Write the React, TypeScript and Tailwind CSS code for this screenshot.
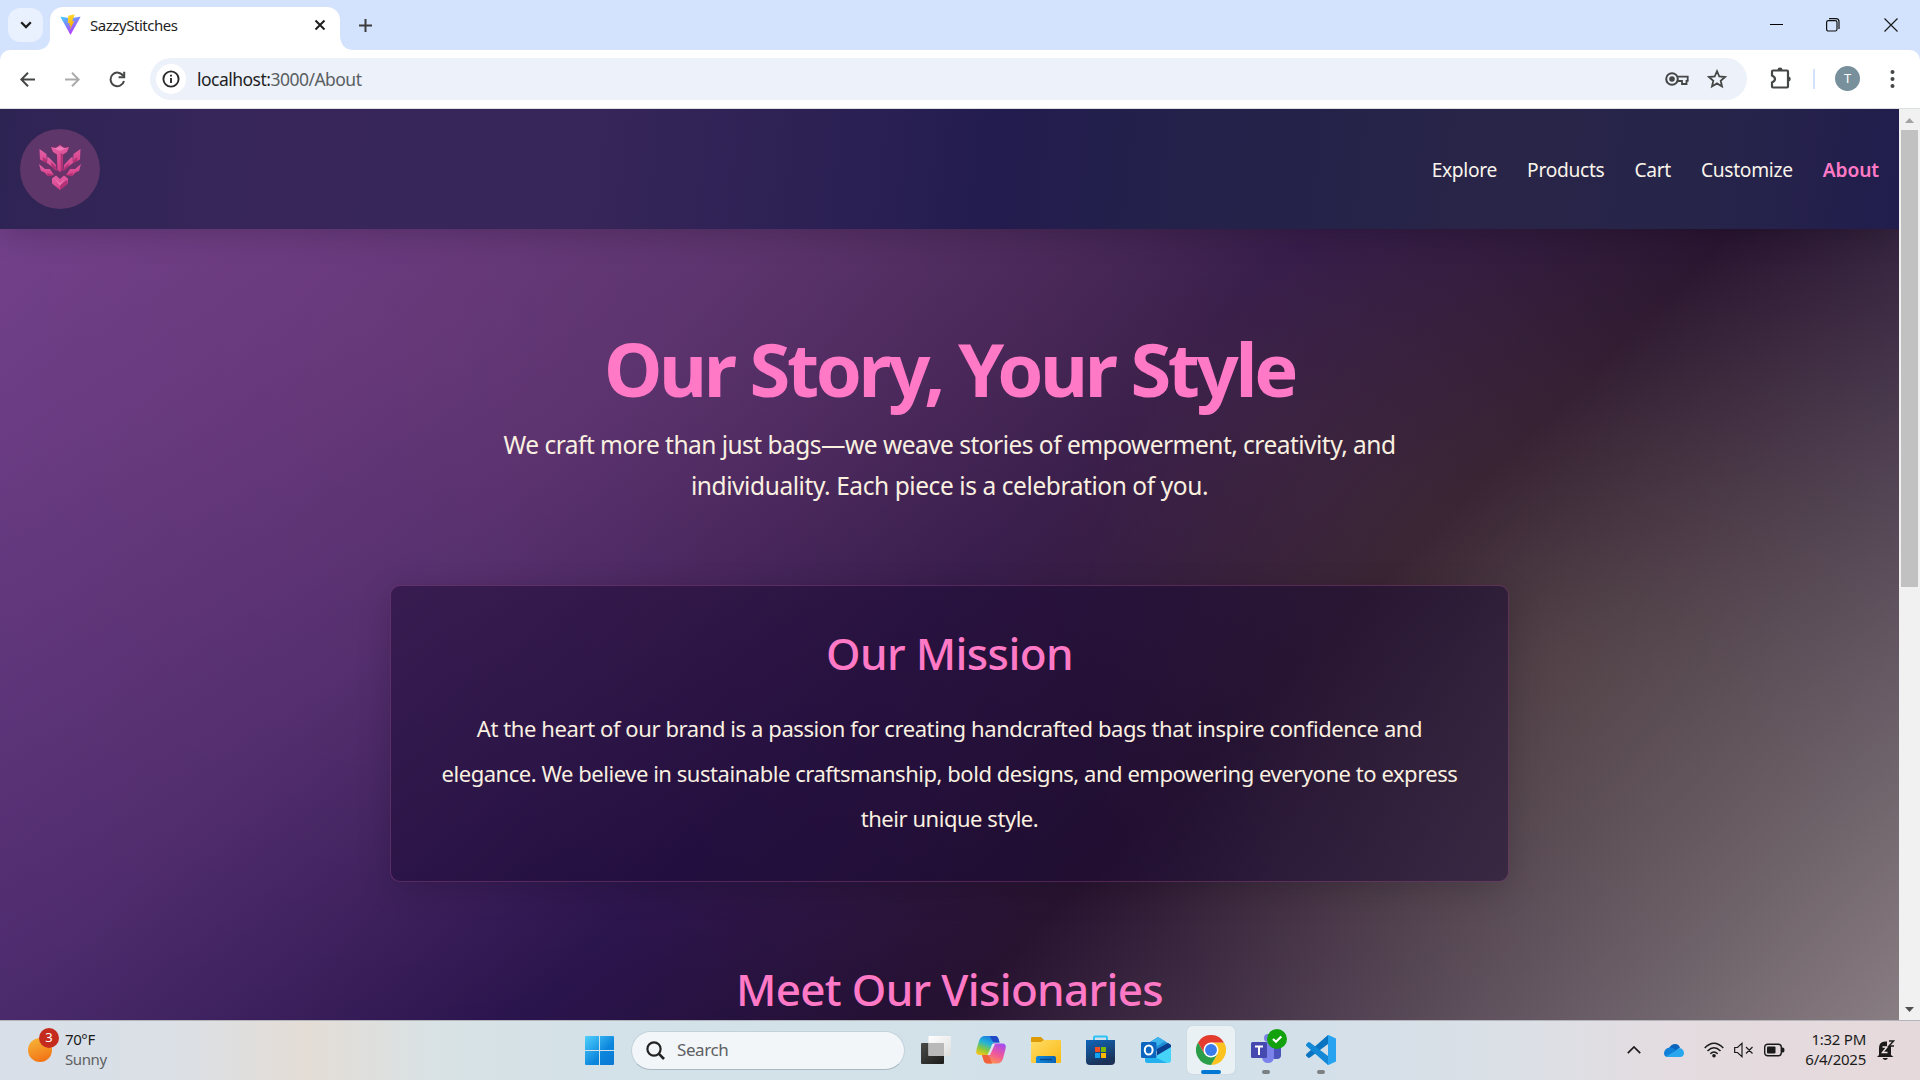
import React from "react";

const navLinks = ["Explore", "Products", "Cart", "Customize"];

function ViteLogo() {
  return (
    <svg width="21" height="21" viewBox="0 0 32 32" className="shrink-0">
      <defs>
        <linearGradient id="viteA" x1="0" y1="0" x2="0.6" y2="1">
          <stop offset="0" stopColor="#41d1ff" />
          <stop offset="1" stopColor="#bd34fe" />
        </linearGradient>
        <linearGradient id="viteB" x1="0" y1="0" x2="0.2" y2="1">
          <stop offset="0" stopColor="#ffdd35" />
          <stop offset="1" stopColor="#ffa800" />
        </linearGradient>
      </defs>
      <path d="M31 5 16.6 31 Q16 31.8 15.4 31 L1 5 Q.6 3.9 1.8 4 L16 6.500 30.2 4 Q31.400 3.9 31 5Z" fill="url(#viteA)" />
      <path d="M22.500 0.500 12.500 2.500 11.800 14 14.800 13.300 14 17.600 16.300 17 14.800 24.500 22 10.800 18.500 11.500Z" fill="url(#viteB)" />
    </svg>
  );
}

function TabStrip() {
  return (
    <div className="flex h-[50px] items-start bg-[#d3e2fd]">
      <button className="ml-2 mt-2 flex h-[34px] w-[35px] items-center justify-center rounded-[12px] bg-[#e9f0fe]">
        <svg width="12" height="8" viewBox="0 0 12 8" fill="none" stroke="#1f1f1f" strokeWidth="2.300">
          <path d="M1.200 1.200 6 6 10.800 1.200" />
        </svg>
      </button>
      <div className="mt-[7px] flex h-[43px]">
        <svg width="7" height="43" viewBox="0 0 7 43" className="overflow-visible">
          <path d="M7.500 27 V43 H-7 Q7.500 43 7.500 27Z" fill="#fff" />
        </svg>
        <div className="flex h-[43px] w-[290px] items-start rounded-t-[13px] bg-white pl-[10px] pr-[14px] pt-[7px]">
          <ViteLogo />
          <span className="ml-[9px] text-[15px] leading-[22px] tracking-[-0.45px] text-[#1f1f1f]">SazzyStitches</span>
          <svg width="12" height="12" viewBox="0 0 12 12" className="ml-auto mt-[5px]" stroke="#1f1f1f" strokeWidth="2">
            <path d="M1.500 1.500 10.500 10.500 M10.500 1.500 1.500 10.500" />
          </svg>
        </div>
        <svg width="14" height="43" viewBox="0 0 14 43">
          <path d="M0 27 V43 H14 Q0 43 0 27Z" fill="#fff" />
        </svg>
      </div>
      <svg width="13" height="13" viewBox="0 0 13 13" className="ml-[5px] mt-[19px]" stroke="#3c3c3c" strokeWidth="2">
        <path d="M6.500 0 V13 M0 6.500 H13" />
      </svg>
      <div className="ml-auto mr-[22px] mt-[18px] flex items-start">
        <svg width="13" height="14" viewBox="0 0 13 14" fill="none" stroke="#000">
          <path d="M0 6.500 H13" />
        </svg>
        <svg width="14" height="14" viewBox="0 0 14 14" fill="none" stroke="#111" strokeWidth="1.200" className="ml-[43px]">
          <rect x="0.600" y="2.600" width="10.400" height="10.400" rx="1.800" />
          <path d="M3 .7 H10 Q13 .7 13 3.700 V11" />
        </svg>
        <svg width="14" height="14" viewBox="0 0 14 14" fill="none" stroke="#1a1a1a" strokeWidth="1.200" className="ml-11">
          <path d="M.5 .5 13.500 13.500 M13.500 .5 .5 13.500" />
        </svg>
      </div>
    </div>
  );
}

function Toolbar() {
  return (
    <div className="h-[59px] bg-[#d3e2fd]">
      <div className="flex h-[59px] items-start rounded-t-[10px] border-b border-[#dadfe0] bg-white pt-2">
        <div className="flex h-[42px] w-[150px] items-center pl-5">
          <svg width="15" height="15" viewBox="0 0 15 15" fill="none" stroke="#454746" strokeWidth="2">
            <path d="M15 7.500 H1.500 M8 .8 1.300 7.500 8 14.200" />
          </svg>
          <svg width="15" height="15" viewBox="0 0 15 15" fill="none" stroke="#ababab" strokeWidth="2" className="ml-[30px]">
            <path d="M0 7.500 H13.500 M7 .8 13.700 7.500 7 14.200" />
          </svg>
          <svg width="17" height="17" viewBox="0 0 17 17" fill="none" stroke="#454746" strokeWidth="2" className="ml-[29px]">
            <path d="M14.300 5 A6.800 6.800 0 1 0 15 10" />
            <path d="M15.200 .8 V6.300 H9.600" />
          </svg>
        </div>
        <div className="flex h-[42px] w-[1597px] items-center rounded-full bg-[#ecf1fa] pl-[6px] pr-[20px]">
          <span className="flex h-[30px] w-[30px] items-center justify-center rounded-full bg-white">
            <svg width="18" height="18" viewBox="0 0 18 18" fill="none" stroke="#2a2b2b" strokeWidth="1.900">
              <circle cx="9" cy="9" r="7.600" />
              <path d="M9 8 V13 M9 4.800 V6.600" />
            </svg>
          </span>
          <span className="ml-[11px] text-[17.5px] leading-6 tracking-[-0.52px] text-[#5a5e62]">
            <span className="text-[#1f1f1f]">localhost:</span>3000/About
          </span>
          <svg width="24" height="14" viewBox="0 0 24 14" fill="none" stroke="#454746" strokeWidth="2" className="ml-auto">
            <circle cx="7" cy="7" r="5.800" />
            <circle cx="7" cy="7" r="1.800" fill="#454746" />
            <path d="M12.500 4.700 H22.700 V8.800 H21.500 V12 H17 V9 H12.500" strokeWidth="1.800" />
          </svg>
          <svg width="20" height="20" viewBox="0 0 20 20" fill="none" stroke="#454746" strokeWidth="1.800" className="ml-[18px]">
            <path d="M10 2.200 12.300 7.500 18 8 13.700 11.800 15 17.400 10 14.400 5 17.400 6.300 11.800 2 8 7.700 7.500Z" />
          </svg>
        </div>
        <svg width="22" height="22" viewBox="0 0 22 22" fill="none" stroke="#454746" strokeWidth="2.200" className="ml-[23px] mt-[9px]">
          <path d="M2 4.500 Q2 3.500 3 3.500 H17 Q18 3.500 18 4.500 V19.500 Q18 20.500 17 20.500 H3 Q2 20.500 2 19.500 V15.500 Q5 14 5 12 Q5 10 2 8.500Z" />
          <path d="M7.500 3 Q7.500 .6 10 .6 Q12.500 .6 12.500 3Z M18.500 9.500 Q20.800 9.700 20.800 12 Q20.800 14.300 18.500 14.500Z" fill="#454746" stroke="none" />
        </svg>
        <div className="ml-[21px] mt-[11px] h-5 w-[2px] bg-[#d3e2fd]" />
        <span className="ml-5 mt-2 flex h-[25px] w-[25px] items-center justify-center rounded-full bg-[#78909c] text-[13px] text-white">T</span>
        <svg width="5" height="18" viewBox="0 0 5 18" fill="#454746" className="ml-[30px] mt-3">
          <circle cx="2.500" cy="2" r="2" />
          <circle cx="2.500" cy="9" r="2" />
          <circle cx="2.500" cy="16" r="2" />
        </svg>
      </div>
    </div>
  );
}

function BrandMark() {
  return (
    <svg width="44" height="46" viewBox="0 0 44 46">
      <defs>
        <linearGradient id="brand" x1="0" y1="0" x2="0.3" y2="1">
          <stop offset="0" stopColor="#e563a8" />
          <stop offset="1" stopColor="#d8428c" />
        </linearGradient>
      </defs>
      <g fill="#8e2c66" opacity=".7">
        <path d="M22 0 32 3 29 9 26 12 26 27 36 12 42 6 42.500 18 37 24 43 21 41 28 34 33 29 33 30 40 22 46 14 40 15 33 10 33 3 28 1 21 7 24 1 18 1 5 9 12 18 24 18 12 12 3Z" opacity=".35" />
      </g>
      <g fill="url(#brand)">
        <path d="M22 1 26 4 31 3 29 8 25 10.500 24.500 26 22 28 19.500 26 19 10.500 15 8 13 3 18 4Z" />
        <path d="M1.500 5 8.500 10 9 19 2 15.500Z M42.500 5 35.500 10 35 19 42 15.500Z" />
        <path d="M9.500 12.500 13 15.500 18 21 18.500 27 13.500 22.500 9 19Z M34.500 12.500 31 15.500 26 21 25.500 27 30.500 22.500 35 19Z" />
        <path d="M1 20 7 25 12 25 16 31 10 32 6 28 3 27Z M43 20 37 25 32 25 28 31 34 32 38 28 41 27Z" />
        <path d="M22 46 14 39.500 14 34.500 18 31.500 22 35 26 31.500 30 34.500 30 39.500Z" />
      </g>
      <g fill="#a72d70" opacity=".8">
        <path d="M22.600 9 25 10.500 24.500 26 22.800 28Z M5 13 9 16 9 19 5 17.500Z M39 13 35 17 35 19 39 17Z" />
        <path d="M13 18 18 23 18.500 27 13.500 22.500Z M31 19 26 24 25.500 27 30.500 22.500Z M9 29 16 31 10 32Z M35 29 28 31 34 32Z M22 41 29 36 30 39.500 22 46Z" />
      </g>
      <path d="M22 2.500 28 4.500 22 7 16 4.500Z M17 35 22 39 27 35 22 42Z" fill="#f98cc4" opacity=".6" />
    </svg>
  );
}

function SiteNav() {
  return (
    <nav className="relative flex h-[120px] shrink-0 items-center justify-between bg-[linear-gradient(97deg,#2e2454_0%,#38265a_14%,#37265a_30%,#2b2053_45%,#231c4f_52%,#23204b_60%,#282548_78%,#27244a_90%,#211d4d_100%)] px-5 shadow-[0_4px_30px_rgba(0,0,0,0.2)]">
      <div className="flex h-20 w-20 items-center justify-center rounded-full bg-[#5e366a] pb-1">
        <BrandMark />
      </div>
      <div className="flex gap-[30px] pt-[2px] text-[19.2px] leading-7 tracking-[-0.3px] text-[#faf4ea]">
        {navLinks.map((label) => (
          <a key={label}>{label}</a>
        ))}
        <a className="font-semibold tracking-[-0.1px] text-[#ff79c6]">About</a>
      </div>
    </nav>
  );
}

function AboutPage() {
  return (
    <main className="flex h-[911px] w-[1899px] flex-col overflow-hidden bg-[radial-gradient(circle_at_20%_25%,rgba(255,121,150,0.10),transparent_850px),radial-gradient(circle_at_62%_28%,rgba(255,160,70,0.10),transparent_800px),radial-gradient(circle_at_82%_60%,rgba(170,190,90,0.13),transparent_480px),linear-gradient(135deg,#6f408d_0%,#4a2a6c_32%,#26124b_51%,#220f30_66%,#897e82_100%)] text-center">
      <SiteNav />
      <h1 className="mt-[95px] text-[74px] font-bold leading-[90px] tracking-[-3.35px] text-[#ff79c6]">Our Story, Your Style</h1>
      <p className="mt-[10px] text-[24.5px] leading-[41px] text-[#faf0e0]">
        <span className="block tracking-[-0.52px]">We craft more than just bags—we weave stories of empowerment, creativity, and</span>
        <span className="block tracking-[-0.42px]">individuality. Each piece is a celebration of you.</span>
      </p>
      <section className="mx-auto mt-[79px] w-[1119px] shrink-0 rounded-[10px] border border-[rgba(255,121,198,0.22)] bg-[rgba(24,7,50,0.5)] py-10 shadow-[0_8px_32px_rgba(0,0,0,0.17)]">
        <h2 className="text-[44px] font-medium leading-[54px] tracking-[-0.6px] text-[#ff79c6]">Our Mission</h2>
        <p className="mt-[26px] text-[22px] leading-[45px] tracking-[-0.46px] text-[#faf0e0]">
          <span className="block tracking-[-0.41px]">At the heart of our brand is a passion for creating handcrafted bags that inspire confidence and</span>
          <span className="block">elegance. We believe in sustainable craftsmanship, bold designs, and empowering everyone to express</span>
          <span className="block">their unique style.</span>
        </p>
      </section>
      <h2 className="mt-20 shrink-0 text-[44px] font-medium leading-[54px] tracking-[-0.66px] text-[#ff79c6]">Meet Our Visionaries</h2>
    </main>
  );
}

function Scrollbar() {
  return (
    <div className="flex w-[21px] flex-col items-center bg-[#f1f1f1]">
      <svg width="9" height="5" viewBox="0 0 9 5" className="mb-[7px] mt-[9px]">
        <path d="M4.500 0 9 5 H0Z" fill="#a3a3a3" />
      </svg>
      <div className="h-[457px] w-[17px] bg-[#c1c1c1]" />
      <svg width="9" height="5" viewBox="0 0 9 5" className="mb-[8px] mt-auto">
        <path d="M4.500 5 9 0 H0Z" fill="#505050" />
      </svg>
    </div>
  );
}

function PinnedApps() {
  return (
    <div className="flex items-center">
      <svg width="30" height="30" viewBox="0 0 30 30">
        <defs>
          <linearGradient id="tv1" x1="0" y1="0" x2="1" y2="1"><stop offset="0" stopColor="#4a4a48" /><stop offset="1" stopColor="#1c1c1b" /></linearGradient>
          <linearGradient id="tv2" x1="0" y1="0" x2="1" y2="1"><stop offset="0" stopColor="#fff" /><stop offset="1" stopColor="#dedede" /></linearGradient>
        </defs>
        <rect x="0" y="8" width="23" height="21" rx="1" fill="url(#tv1)" />
        <rect x="7.500" y="1" width="22.500" height="20" rx="1" fill="url(#tv2)" />
        <rect x="7.500" y="8" width="15.500" height="13" fill="#b9b9b9" />
      </svg>
      <svg width="32" height="30" viewBox="0 0 32 30" className="ml-6">
        <defs>
          <linearGradient id="cp1" x1="0.700" y1="0" x2="0.200" y2="1"><stop offset="0" stopColor="#1b6fe0" /><stop offset=".4" stopColor="#24b4d8" /><stop offset=".72" stopColor="#8cc83c" /><stop offset="1" stopColor="#f6c51c" /></linearGradient>
          <linearGradient id="cp2" x1="0.800" y1="0" x2="0.300" y2="1"><stop offset="0" stopColor="#a44df0" /><stop offset=".5" stopColor="#f0579a" /><stop offset="1" stopColor="#ff9a4a" /></linearGradient>
        </defs>
        <path d="M15 1 H20 Q22.500 1 23.500 4 L24.500 7.500 H20 Q17.500 7.500 16.500 11 L14 20 H5 Q0 20 1.500 14.500 L4 6 Q5.500 1 10 1Z" fill="url(#cp1)" />
        <path d="M15 1 H20 Q22.500 1 23.500 4 L24.500 7.500 H20 Q17 7 15 1Z" fill="#2149c6" />
        <path d="M17 28.500 H12.500 Q9.500 28.500 8.500 25 L7 20 H12 Q14.500 20 15.500 17 L18 8.500 H27 Q32 8.500 30.500 14 L28 23.500 Q26.500 28.500 22 28.500Z" fill="url(#cp2)" />
        <path d="M17 28.500 H12.500 Q9.500 28.500 8.500 25 L7 20 H12 Q15 21 17 28.500Z" fill="#f0603c" />
        <path d="M17.500 9 H20 L15 20 H12.500Z" fill="#dce6ee" />
      </svg>
      <svg width="30" height="28" viewBox="0 0 30 28" className="ml-6">
        <defs>
          <linearGradient id="fd" x1="0" y1="0" x2="1" y2="1"><stop offset="0" stopColor="#ffdd67" /><stop offset="1" stopColor="#fbb914" /></linearGradient>
          <linearGradient id="fd2" x1="0" y1="0" x2="1" y2="0"><stop offset="0" stopColor="#0f8ade" /><stop offset="1" stopColor="#0b62b4" /></linearGradient>
        </defs>
        <path d="M0 2 Q0 1 1 1 H10 L13 4 H28 V10 H0Z" fill="#dd9c07" />
        <path d="M0 6 H10 L13 4 H29 Q30 4 30 5 V26 Q30 27 29 27 H1 Q0 27 0 26Z" fill="url(#fd)" />
        <path d="M5 27 V22 Q5 20 7 20 H23 Q25 20 25 22 V27Z" fill="url(#fd2)" />
        <path d="M9 23.500 H21" stroke="#07468b" strokeWidth="1.400" />
      </svg>
      <svg width="29" height="30" viewBox="0 0 29 30" className="ml-[25px]">
        <defs><linearGradient id="st" x1="0" y1="0" x2="0.400" y2="1"><stop offset="0" stopColor="#0f66b8" /><stop offset="1" stopColor="#1b3157" /></linearGradient></defs>
        <path d="M8 6 V2.500 Q8 1.500 9 1.500 H20 Q21 1.500 21 2.500 V6" fill="none" stroke="#2fc2f5" strokeWidth="2" />
        <path d="M0 5 H29 V26 Q29 30 25 30 H4 Q0 30 0 26Z" fill="url(#st)" />
        <path d="M9 12 H14 V17 H9Z" fill="#f25022" /><path d="M15 12 H20 V17 H15Z" fill="#7fba00" />
        <path d="M9 18 H14 V23 H9Z" fill="#12a4f0" /><path d="M15 18 H20 V23 H15Z" fill="#ffb900" />
      </svg>
      <svg width="30" height="28" viewBox="0 0 30 28" className="ml-[26px]">
        <path d="M4 9 17 1 30 9 V15 H4Z" fill="#1f8fd8" />
        <path d="M17 1 24 5 10 14 4 10Z" fill="#3cb5ee" />
        <path d="M27 7 30 9 V12 L16 20 V13Z" fill="#0b3f8f" />
        <path d="M30 11 V24 Q30 27 27 27 H7 Q4 27 4 24 V21 L15 14.500 V20Z" fill="#45d3f8" />
        <path d="M4 22 H16 L26 27 H7 Q4 27 4 24Z" fill="#22b1ee" />
        <rect x="0" y="6" width="15.500" height="16" rx="1.500" fill="#0c66c0" />
        <ellipse cx="7.700" cy="14" rx="3.900" ry="4.600" fill="none" stroke="#fff" strokeWidth="2" />
      </svg>
      <div className="ml-4 flex h-12 w-12 flex-col items-center rounded-[5px] bg-[#eaf1f5] pt-[9px] shadow-[0_0_1px_#9fb0bb]">
        <svg width="30" height="30" viewBox="0 0 48 48">
          <path d="M24 12 H44.800 A24 24 0 0 1 24 48 L34.400 30Z" fill="#fcc31e" />
          <path d="M13.600 30 3.200 12 A24 24 0 0 0 24 48 L34.400 30Z" fill="#2a9e48" />
          <path d="M3.200 12 A24 24 0 0 1 44.800 12 H24 L13.600 30Z" fill="#e33b2e" />
          <circle cx="24" cy="24" r="12" fill="#fff" />
          <circle cx="24" cy="24" r="9.500" fill="#3a7cec" />
        </svg>
        <div className="mt-[5px] h-1 w-5 shrink-0 rounded-full bg-[#0078d4]" />
      </div>
      <div className="ml-4 flex h-12 w-[36px] flex-col pt-[3px]">
        <svg width="36" height="36" viewBox="0 0 36 36" className="shrink-0">
          <rect x="20" y="13" width="10" height="17" rx="4" fill="#4b53bc" />
          <circle cx="17" cy="9" r="4" fill="#7b83eb" />
          <path d="M11 13 H23 V27 Q23 34 17 34 Q12 34 11 29Z" fill="#7b83eb" />
          <rect x="0" y="13" width="16" height="16" rx="1.500" fill="#4549b0" />
          <path d="M4 17.500 H12 M8 17.500 V26" stroke="#fff" strokeWidth="2" fill="none" />
          <circle cx="26" cy="10" r="10" fill="#13a10e" />
          <path d="M22 10 25 12.800 30.300 7.500" fill="none" stroke="#fff" strokeWidth="2.200" />
        </svg>
        <div className="ml-[11px] mt-[5px] h-1 w-2 shrink-0 rounded-full bg-[#7b8083]" />
      </div>
      <div className="ml-[19px] flex h-12 w-[30px] flex-col items-center pt-[9px]">
        <svg width="30" height="30" viewBox="0 0 30 30">
          <path d="M0 20.500 Q-.3 19.500 .6 18.700 L22 0 V9 L4 22.500 Q2.800 23.300 1.800 22.400Z" fill="#0a74c0" />
          <path d="M0 9.500 Q-.3 10.500 .6 11.300 L22 30 V21 L4 7.500 Q2.800 6.700 1.800 7.600Z" fill="#1288d6" />
          <path d="M21.500 .2 22.500 0 30 3.500 V26.500 L22.500 30 21 29.500 Q22 29.500 22 28 V2 Q22 .8 21.500 .2Z" fill="#27a3f0" />
        </svg>
        <div className="mt-[5px] h-1 w-2 shrink-0 rounded-full bg-[#7b8083]" />
      </div>
    </div>
  );
}

function Tray() {
  return (
    <div className="ml-auto flex items-center text-[#1b1b1b]">
      <svg width="14" height="8" viewBox="0 0 14 8" fill="none" stroke="#1b1b1b" strokeWidth="1.700">
        <path d="M.8 7.200 7 1 13.200 7.200" />
      </svg>
      <svg width="20" height="13" viewBox="0 0 20 13" className="ml-[23px]">
        <path d="M5 4 Q7.500 0 11 0 Q15 .2 16 4 L10 8 3 6Z" fill="#0a64bd" />
        <path d="M5 3.800 Q8 3 11 5.500 L13 9 3 13 Q0 12.500 0 9 Q.5 4.500 5 3.800Z" fill="#0f7fd8" />
        <path d="M2 12.500 12 6.500 Q14 3.500 17.500 4.500 Q20 6 20 9 Q19.800 13 16 13 H4Z" fill="#29a7ee" />
      </svg>
      <svg width="20" height="16" viewBox="0 0 20 16" fill="none" stroke="#1b1b1b" strokeWidth="1.500" className="ml-5">
        <path d="M.7 6 Q10 -3.500 19.300 6 M3.500 9 Q10 2.500 16.500 9 M6.300 11.800 Q10 8.200 13.700 11.800" />
        <circle cx="10" cy="13.700" r="1.800" fill="#1b1b1b" stroke="none" />
      </svg>
      <svg width="20" height="16" viewBox="0 0 20 16" fill="none" stroke="#1b1b1b" strokeWidth="1.200" className="ml-[10px]">
        <path d="M.7 5.500 H3.500 L8 1.300 V14.700 L3.500 10.500 H.7Z M12 5 18.500 11.500 M18.500 5 12 11.500" />
      </svg>
      <svg width="21" height="14" viewBox="0 0 21 14" className="ml-[10px]">
        <rect x=".7" y="1.200" width="16.600" height="11.600" rx="3" fill="none" stroke="#1b1b1b" strokeWidth="1.400" />
        <rect x="3" y="3.500" width="8.500" height="7" rx="1" fill="#1b1b1b" />
        <path d="M18 4.500 H19 Q20.500 4.500 20.500 7 Q20.500 9.500 19 9.500 H18Z" fill="#1b1b1b" />
      </svg>
      <div className="ml-[19px] w-[62px] pb-[3px] text-right text-[15px] leading-5 tracking-[-0.25px]">
        <div>1:32 PM</div>
        <div>6/4/2025</div>
      </div>
      <svg width="18" height="20" viewBox="0 0 18 20" className="ml-[11px] mr-[25px]">
        <path d="M2 15 V8 Q2 1.500 8 1.500 H10 V6 H14 V15 L16.500 17 H0Z" fill="#1b1b1b" />
        <path d="M5.500 18 H11 Q10 20 8.200 20 Q6.500 20 5.500 18Z" fill="#1b1b1b" />
        <path d="M5.500 7 H10 L5.500 12.500 H10.500" fill="none" stroke="#f2e8e8" strokeWidth="1.400" />
        <path d="M12 1 H16.500 L12 6 H17" fill="none" stroke="#1b1b1b" strokeWidth="1.400" />
      </svg>
    </div>
  );
}

function Taskbar() {
  return (
    <footer className="flex h-[60px] items-center border-t border-[#b4b5bb] bg-[linear-gradient(90deg,#d8dfe8_0%,#dbe0e6_9%,#e4ddd6_16%,#d8e2e5_23%,#d3e1e8_32%,#d2e0ea_66%,#dbe0e6_79%,#e4dce0_87%,#e6d9db_100%)] pb-px">
      <div className="flex w-[585px] items-center">
        <div className="relative ml-[28px] h-6 w-6 rounded-full bg-linear-160 from-[#f5b83a] to-[#f0680a]">
          <span className="absolute -top-[10px] left-[11px] flex h-5 w-5 items-center justify-center rounded-full bg-[#c42b1c] text-[13px] text-white">3</span>
        </div>
        <div className="ml-[13px] pb-[3px] text-[15px] leading-5 tracking-[-0.4px]">
          <div className="text-[#1b1b1b]">70°F</div>
          <div className="text-[#5d6163]">Sunny</div>
        </div>
      </div>
      <svg width="29" height="29" viewBox="0 0 29 29">
        <defs><linearGradient id="win" x1="0" y1="0" x2="1" y2="1"><stop offset="0" stopColor="#4fd0fd" /><stop offset=".6" stopColor="#0c86dc" /><stop offset="1" stopColor="#0a78d4" /></linearGradient></defs>
        <path d="M0 1 Q0 0 1 0 H14 V14 H0Z M15 0 H28 Q29 0 29 1 V14 H15Z M0 15 H14 V29 H1 Q0 29 0 28Z M15 15 H29 V28 Q29 29 28 29 H15Z" fill="url(#win)" />
      </svg>
      <div className="ml-[17px] flex h-[39px] w-[274px] items-center rounded-full border border-b-[#a9b8c2] border-[#c2d2db] bg-[#f2f6f9] pl-[14px]">
        <svg width="19" height="19" viewBox="0 0 19 19" fill="none" stroke="#222" strokeWidth="2.200">
          <circle cx="8" cy="8" r="6.600" />
          <path d="M12.700 12.700 18 18" strokeWidth="2.600" />
        </svg>
        <span className="ml-[12px] text-[17px] leading-6 tracking-[-0.4px] text-[#5d6163]">Search</span>
      </div>
      <div className="ml-4"><PinnedApps /></div>
      <Tray />
    </footer>
  );
}

export default function App() {
  return (
    <div className="flex h-[1080px] w-[1920px] flex-col overflow-hidden font-['Noto_Sans',sans-serif]">
      <TabStrip />
      <Toolbar />
      <div className="flex h-[911px]">
        <AboutPage />
        <Scrollbar />
      </div>
      <Taskbar />
    </div>
  );
}
